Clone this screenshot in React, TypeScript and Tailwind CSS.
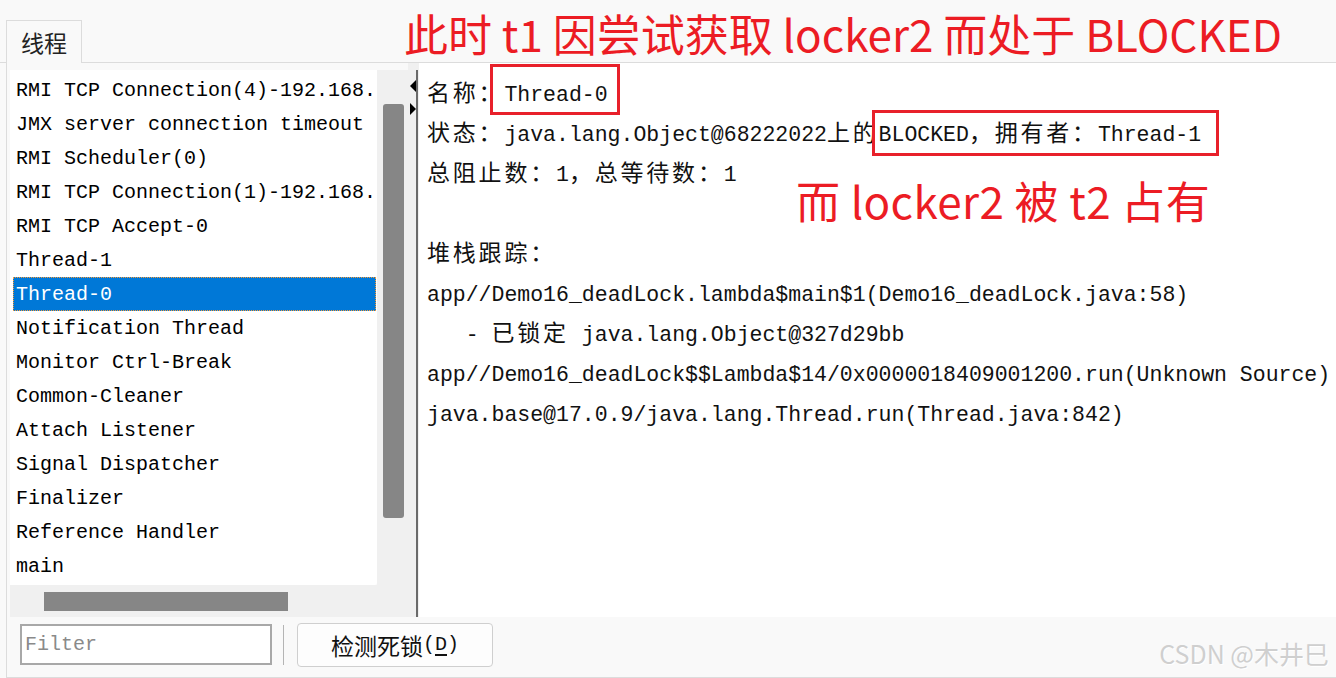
const mono = "font-['Liberation_Mono','Noto_Sans_CJK_SC',monospace]";
const cjk = "font-['Noto_Sans_CJK_SC',sans-serif]";

const threads = [
  "RMI TCP Connection(4)-192.168.",
  "JMX server connection timeout",
  "RMI Scheduler(0)",
  "RMI TCP Connection(1)-192.168.",
  "RMI TCP Accept-0",
  "Thread-1",
  "Thread-0",
  "Notification Thread",
  "Monitor Ctrl-Break",
  "Common-Cleaner",
  "Attach Listener",
  "Signal Dispatcher",
  "Finalizer",
  "Reference Handler",
  "main",
];

// full-width chars: same cell width as two mono chars
function C({ children }: { children: string }) {
  return <span className={`${cjk} text-[23px] leading-none tracking-[2.8px]`}>{children}</span>;
}

function Line({ children }: { children?: React.ReactNode }) {
  return <div className="h-[40px] leading-[40px] whitespace-pre">{children}</div>;
}

export default function App() {
  return (
    <div className="relative w-[1336px] h-[678px] overflow-hidden bg-[#f9f9f9] flex flex-col text-black">
      {/* tab header */}
      <div className="h-[63px] flex items-end pl-[6px] border-b border-[#dcdcdc] shrink-0">
        <div className={`${cjk} -mb-px h-[43px] w-[76px] border border-b-0 border-[#dcdcdc] bg-[#f9f9f9] flex items-center justify-center text-[23px] text-[#222]`}>
          线程
        </div>
      </div>

      <div className="flex-1 ml-[6px] border-l border-b border-[#dcdcdc] flex flex-col">
        <div className="h-[554px] flex">
          {/* thread list */}
          <div className="w-[401px] pt-[7px] pl-[3px] flex flex-col bg-[#f9f9f9]">
            <div className="flex h-[515px]">
              <div className={`${mono} w-[367px] bg-white rounded-br-[3px] pt-[3px] text-[20px] overflow-hidden`}>
                {threads.map((t) => (
                  <div
                    key={t}
                    className={
                      "h-[34px] leading-[36px] ml-[3px] pl-[3px] whitespace-nowrap " +
                      (t === "Thread-0"
                        ? "bg-[#0078d7] text-white outline outline-dotted outline-[#f59a38] -outline-offset-1 w-[363px]"
                        : "")
                    }
                  >
                    {t}
                  </div>
                ))}
              </div>
              <div className="flex-1 bg-[#f0f0f0] pt-[34px] pl-[6px]">
                <div className="w-[21px] h-[414px] bg-[#868686] rounded-[3px]" />
              </div>
            </div>
            <div className="h-[32px] bg-[#f0f0f0] pt-[7px] pl-[34px]">
              <div className="w-[244px] h-[19px] bg-[#868686]" />
            </div>
          </div>

          {/* splitter */}
          <div className="w-[11px] bg-[#f0f0f0] flex pt-[7px]">
            <div className="w-[8px] relative">
              <svg className="absolute left-[2px] top-[10px]" width="6" height="12" viewBox="0 0 6 12">
                <path d="M6 0 L0 6 L6 12 Z" fill="#000" />
              </svg>
              <svg className="absolute left-[2px] top-[33px]" width="6" height="12" viewBox="0 0 6 12">
                <path d="M0 0 L6 6 L0 12 Z" fill="#000" />
              </svg>
            </div>
            <div className="w-[2px] bg-[#6a6a6a]" />
          </div>

          {/* details */}
          <div className={`${mono} flex-1 bg-white pl-[8px] pt-[12px] text-[21.5px] text-[#111]`}>
            <Line>
              <C>名称：</C>Thread-0
            </Line>
            <Line>
              <C>状态：</C>java.lang.Object@68222022<C>上的</C>BLOCKED<C>，拥有者：</C>Thread-1
            </Line>
            <Line>
              <C>总阻止数：</C>1<C>，总等待数：</C>1
            </Line>
            <Line />
            <Line>
              <C>堆栈跟踪：</C>
            </Line>
            <Line>app//Demo16_deadLock.lambda$main$1(Demo16_deadLock.java:58)</Line>
            <Line>
              {"   - "}
              <C>已锁定</C>
              {" java.lang.Object@327d29bb"}
            </Line>
            <Line>app//Demo16_deadLock$$Lambda$14/0x0000018409001200.run(Unknown Source)</Line>
            <Line>java.base@17.0.9/java.lang.Thread.run(Thread.java:842)</Line>
          </div>
        </div>

        {/* bottom bar */}
        <div className="flex-1 flex items-start pl-[13px] pt-[6px]">
          <div className="mt-[1px] w-[252px] h-[41px] border-2 border-[#a8a8a8] bg-white flex items-center pl-[3px]">
            <span className={`${mono} text-[20px] text-[#8a8a8a]`}>Filter</span>
          </div>
          <div className="ml-[11px] mt-[2px] w-px h-[40px] bg-[#b4b4b4]" />
          <button className="ml-[13px] w-[196px] h-[44px] border border-[#cfcfcf] rounded-[4px] bg-[#fdfdfd] flex items-center justify-center">
            <span className={`${cjk} text-[23px] text-[#111]`}>检测死锁</span>
            <span className={`${mono} text-[20px] text-[#111]`}>
              (<span className="underline underline-offset-4">D</span>)
            </span>
          </button>
        </div>
      </div>

      {/* annotations */}
      <div className={`${cjk} absolute left-[404px] top-[11px] text-[44px] leading-none text-[#ec1c24] whitespace-nowrap`}>
        此时 t1 因尝试获取 locker2 而处于 BLOCKED
      </div>
      <div className={`${cjk} absolute left-[796px] top-[178px] text-[44px] leading-none text-[#ec1c24] whitespace-nowrap tracking-[0.4px]`}>
        而 locker2 被 t2 占有
      </div>
      <div className="absolute left-[490px] top-[64px] w-[130px] h-[51px] border-[3px] border-[#e8202a]" />
      <div className="absolute left-[872px] top-[110px] w-[347px] h-[46px] border-[3px] border-[#e8202a]" />

      <div className={`${cjk} absolute right-[7px] bottom-[6px] text-[25px] text-[#cfcfcf] [text-shadow:1px_1px_1px_#fff]`}>
        CSDN @木井巳
      </div>
    </div>
  );
}
